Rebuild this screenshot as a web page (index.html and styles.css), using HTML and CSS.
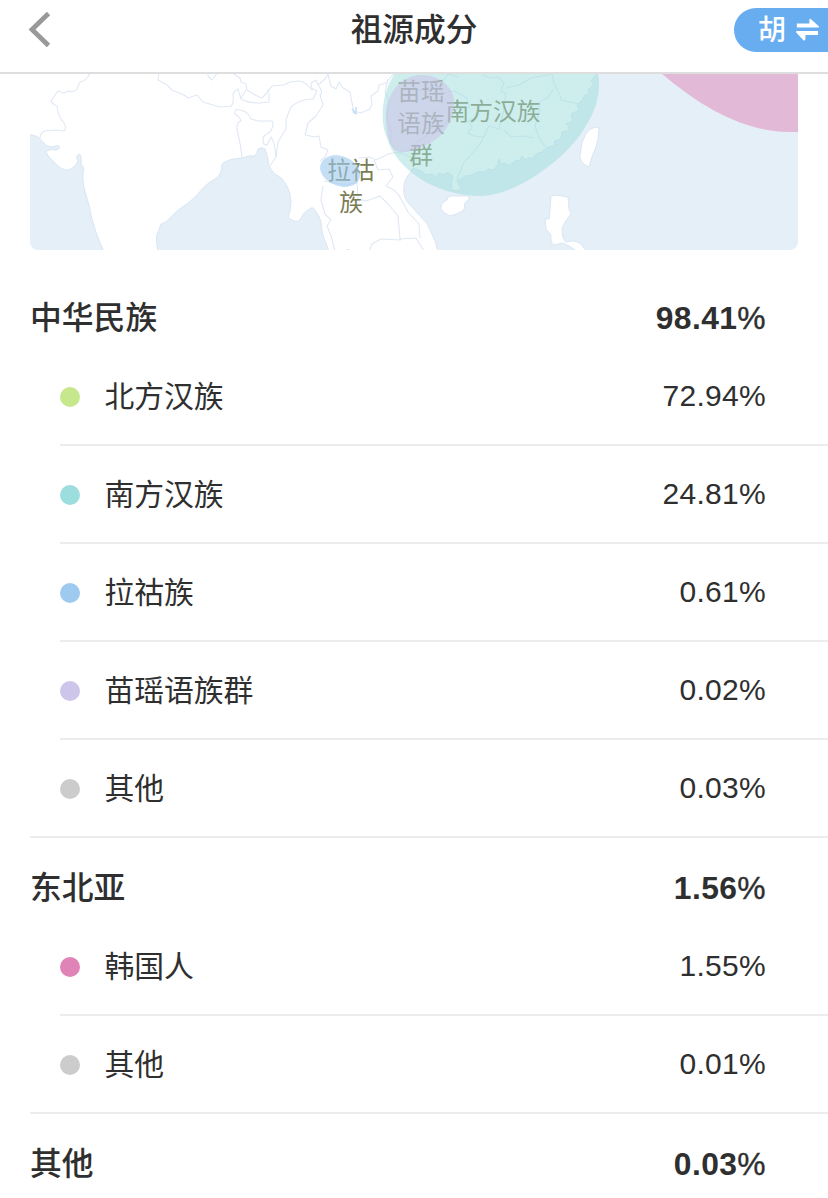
FILE: index.html
```html
<!DOCTYPE html>
<html lang="zh-CN">
<head>
  <meta charset="UTF-8" />
  <meta name="viewport" content="width=device-width, initial-scale=1.0"/>
  <title>祖源成分</title>
  <link rel="stylesheet" href="styles.css">
</head>
<body>

<header class="header">
  <a class="back" href="#" aria-label="返回">
    <svg width="24" height="36" viewBox="0 0 24 36"><path d="M20.5 1.5 L4 17.5 L20.5 33.5" fill="none" stroke="#999" stroke-width="4.8"/></svg>
  </a>
  <h1 class="title">祖源成分</h1>
  <button class="switch">
    <span>胡</span>
    <svg width="24" height="24" viewBox="0 0 24 24" fill="#fff">
      <path d="M0.8 5.4 H13.4 V2 Q13.4 0 15 1.2 L22.8 8.3 V9.6 H0.8 Z"/>
      <path d="M22 17.1 H9.4 V21 Q9 23.4 7.4 22.2 L0.2 14.6 V13 H22 Z"/>
    </svg>
  </button>
</header>

<main>
  <svg class="map" viewBox="30 74 768 176">
    <!-- land -->
    <g class="land">
      <path d="M28 60 V134 L36 136 Q40 138 42 141 Q46 147 52 147 Q57 145 59 146 Q61 149 56 150 Q48 149 46 152 Q48 157 54 162 Q62 171 68 170 Q75 168 78 161 Q75 156 79 154 Q82 155 81 164 Q85 167 83 173 Q82 182 86 195 Q90 207 91 215 Q95 232 104 252 H158 Q155 236 158 232 L161 224 Q166 223 171 217 Q179 208 187 204 Q197 196 204 187 Q209 182 215 179 Q222 175 222 164 Q227 159 242 158 Q249 155 255 156 Q257 153 258 149 Q262 146 265 149 Q268 156 269 166 Q273 174 280 177 Q287 183 290 194 Q292 202 290 211 Q287 218 290 219 Q297 223 300 220 Q304 211 310 209 Q312 206 314 209 Q320 216 321 222 Q322 236 326 243 L329 252 H345 Q348 247 352 252 H438 Q436 241 431 232 Q428 223 421 217 L411 206 Q402 198 404 185 Q405 178 410 173 L413 168 L421 171 L426 175 L432 174 L436 177 L439 173 L444 175 L447 172 L453 176 L451 187 Q452 192 459 190 L461 188 L458 183 L457 180 L461 179 L465 176 L472 175 L478 172 L485 172 L488 169 L493 170 L497 166 L499 159 L501 164 L506 163 L508 166 L515 161 L520 160 L522 156 L526 160 L530 157 L532 159 L536 154 L542 152 L548 147 L554 146 L555 141 L561 139 L562 132 L568 131 L569 127 L566 124 L573 121 L571 114 L579 110 L577 105 L582 100 L585 95 L590 94 L588 90 L594 84 L591 81 L596 75 L597 60 Z"/>
      <path d="M596 127 L599 128 Q599 139 596 147 Q592 155 589 167 L585 165 Q579 160 580 155 L582 143 Q585 133 590 129 Z"/>
      <path d="M448 197 Q452 195 456 196 L469 196 L469 199 L465 203 L464 210 L457 214 L450 216 Q443 213 441 209 Q440 203 447 200 Z"/>
      <path d="M551 196 L555 195 L568 197 L569 209 L571 214 Q565 221 562 228 Q562 239 566 242 Q575 239 581 244 L587 252 H578 L569 246 L563 243 L554 245 Q550 243 551 235 L546 229 L545 219 L549 219 L550 210 Z"/>
    </g>

    <!-- borders -->
    <g class="border">
      <path d="M90 72 Q88 80 80 82 L77 89 Q74 93 68 91 L64 93 L58 91 Q54 96 51 101 Q52 104 57 106 Q58 116 64 123 Q67 129 64 131 L56 130 L44 131 Q40 134 40 138"/>
      <path d="M159 72 L158 80 L167 85 L172 90 L184 95 L188 98 L197 95 L203 102 L213 105 L220 107 L231 106 Q234 104 233 94 Q235 90 238 89 L241 99 Q247 103 260 103 L269 102 L269 93 M267 93 L272 86 L284 85 L290 82 L299 81 Q306 82 312 90 L311 83 L316 80 L318 85 L325 79 L328 74 L331 86 L336 89 L339 82 L343 88 L350 92 L352 103 L354 111 L361 113 L370 109 L372 104 L371 96 L378 91 L379 85 L386 83 L395 72"/>
      <path d="M231 72 L240 78 L241 82 L246 84 L247 90 Q254 95 262 98 Q267 94 269 89 M246 90 L241 98 M208 72 L208 76 L212 80 L218 72"/>
      <path d="M242 158 Q241 146 238 134 Q235 122 241 121 Q240 117 235 114 Q234 108 240 110 Q248 111 251 119 L258 121 L272 121 Q275 124 270 132 L264 136 Q261 145 267 145 L271 137 Q275 143 276 157 L270 166"/>
      <path d="M276 157 L278 142 L286 129 L286 119 L291 107 Q300 99 313 99 L317 91 L311 88 M318 85 Q324 92 320 95 L323 105 L316 116 L308 123 L305 135 L315 137 L319 136 L321 147 L328 150 L325 157 L320 161"/>
      <path d="M359 158 L370 157 L376 160 L388 154 L399 152 L413 158 M374 160 L378 170 L389 169 L393 177 L386 186 Q397 190 401 199 L408 212 L419 224 L420 238 M323 186 L321 200 L325 214 L331 220 L327 226 L331 236 L335 251 M324 181 L347 185 L357 182 L358 199 L366 201 L380 196 L389 205 L398 216 L399 228 L400 239 L416 238 L424 251 M401 240 L381 239 L372 244 L369 252"/>
      <path d="M388 79 L385 92 L389 101 L387 119 L392 133 L390 143 L399 153 L411 150 L418 141 L431 133 L440 131 L448 120 L457 109 L469 107 L467 98 L454 91 L444 93 L434 85 L420 91 L412 86"/>
      <path d="M430 84 L444 80 L448 74 L459 77 M483 75 L490 78 L498 77 L504 83 L501 91 L506 93 L504 104 L503 113 L499 129 L489 126 L484 137 L474 136 L468 133 L472 127 L468 121 L476 118"/>
      <path d="M506 88 L519 85 L531 78 L552 74 L554 84 L560 95 L561 100 L579 104 M554 89 L547 98 L540 102 L539 113 L535 126 L539 138 L547 149 M504 130 L511 137 L524 136 L534 138 M484 137 L480 144 L474 151 L463 164 L457 179"/>
    </g>
    <path class="lake" d="M352 109 L355 113 L356 112 L356 107 M353 112 L357 114"/>

    <!-- labels sit under the colored regions -->
    <g class="map-label">
      <text x="421" y="100">苗瑶</text>
      <text x="421" y="132">语族</text>
      <text x="421" y="164">群</text>
      <text x="493" y="120">南方汉族</text>
      <text x="351" y="179">拉祜</text>
      <text x="351" y="211">族</text>
    </g>

    <!-- regions -->
    <path class="region teal" d="M396 72 C382 90 379 121 387 138 C396 169 435 196 481 196 C519 195 570 155 585 127 C597 109 601 91 598 72 Z"/>
    <path class="region purple" d="M386 117 C386 93 401 75 422 75 C442 75 455 90 454 103 C453 121 446 134 430 143 C420 149 410 152 402 152 C390 151 386 137 386 117 Z"/>
    <path class="region blue" d="M320 168 C320 160 328 155 336 155 C349 156 359 164 360 173 C361 182 354 187 344 187 C333 186 321 179 320 168 Z"/>
    <path class="region pink" d="M660 72 C705 111 748 132 790 132 H800 V72 Z"/>
  </svg>

  <section class="group">
    <div class="group-title"><span>中华民族</span><span class="value">98.41<i>%</i></span></div>
    <ul class="list">
      <li class="item"><span class="dot dot-green"></span><span class="name">北方汉族</span><span class="value">72.94%</span></li>
      <li class="item"><span class="dot dot-teal"></span><span class="name">南方汉族</span><span class="value">24.81%</span></li>
      <li class="item"><span class="dot dot-blue"></span><span class="name">拉祜族</span><span class="value">0.61%</span></li>
      <li class="item"><span class="dot dot-purple"></span><span class="name">苗瑶语族群</span><span class="value">0.02%</span></li>
      <li class="item"><span class="dot"></span><span class="name">其他</span><span class="value">0.03%</span></li>
    </ul>
  </section>

  <section class="group">
    <div class="group-title"><span>东北亚</span><span class="value">1.56<i>%</i></span></div>
    <ul class="list">
      <li class="item"><span class="dot dot-pink"></span><span class="name">韩国人</span><span class="value">1.55%</span></li>
      <li class="item"><span class="dot"></span><span class="name">其他</span><span class="value">0.01%</span></li>
    </ul>
  </section>

  <section class="group">
    <div class="group-title"><span>其他</span><span class="value">0.03<i>%</i></span></div>
  </section>
</main>

</body>
</html>
```

FILE: styles.css
```css
* {
  box-sizing: border-box;
}

body {
  margin: 0;
  height: 1198px;
  overflow: hidden;
  background: #fff;
  color: #2f2f30;
  font-family: "Liberation Sans", "Noto Sans CJK SC", sans-serif;
}

.header {
  display: grid;
  grid-template-columns: 1fr auto 1fr;
  height: 74px;
  padding-bottom: 13px;
  align-items: center;
  border-bottom: 2px solid #dedede;
}

.back {
  display: flex;
  padding-left: 28px;
}

.title {
  margin: 0;
  padding-top: 2px;
  font-size: 31.7px;
  font-weight: 500;
  line-height: 57px;
}

.switch {
  display: flex;
  align-items: center;
  justify-self: end;
  gap: 10px;
  width: 94px;
  height: 44px;
  padding: 1px 0 0 24px;
  border: none;
  border-radius: 22px 0 0 22px;
  background: #68adf0;
  color: #fff;
  font-family: inherit;
  font-size: 28px;
  font-weight: 500;
  line-height: 42px;
}

.switch span {
  padding-top: 1px;
}

.switch svg {
  flex: none;
}

.map {
  display: block;
  width: 768px;
  height: 176px;
  margin: 0 30px 18px;
  border-radius: 0 0 8px 8px;
  background: #e5eff8;
}

.land {
  fill: #fff;
  stroke: #dae5f2;
  stroke-width: 1;
}

.border {
  fill: none;
  stroke: #e0e8f4;
  stroke-width: 1.1;
  stroke-linejoin: round;
}

.lake {
  fill: none;
  stroke: #c5dff3;
  stroke-width: 1.5;
}

.map-label {
  fill: #7a7d53;
  font-size: 23.7px;
  text-anchor: middle;
}

.region {
  opacity: 0.5;
}

.teal {
  fill: #9cdddb;
}

.purple {
  fill: #cbbce8;
}

.blue {
  fill: #9cc9ef;
  opacity: 0.6;
}

.pink {
  fill: #e083b6;
}

.group {
  margin-left: 30px;
  padding-top: 20px;
  border-bottom: 2px solid #ebecee;
}

.group:last-child {
  border-bottom: none;
}

.group-title {
  display: flex;
  justify-content: space-between;
  height: 60px;
  padding-right: 62px;
  font-size: 31.8px;
  font-weight: 500;
  line-height: 60px;
}

.group-title .value {
  font-weight: bold;
  letter-spacing: 0.4px;
}

.group-title i {
  font-style: normal;
  font-weight: normal;
  -webkit-text-stroke: 0.4px #2f2f30;
}

.list {
  margin: 0 0 0 30px;
  padding: 0;
  list-style: none;
}

.item {
  display: flex;
  align-items: center;
  height: 98px;
  padding: 1px 62px 0 0;
  border-bottom: 2px solid #ebecee;
  font-size: 30px;
  line-height: 95px;
}

.item:last-child {
  height: 96px;
  border-bottom: none;
}

.item .name {
  font-size: 29.8px;
}

.item .value {
  margin-left: auto;
  padding-bottom: 2px;
  letter-spacing: 0.3px;
  line-height: 93px;
}

.dot {
  width: 20px;
  height: 20px;
  margin-right: 24.4px;
  border-radius: 50%;
  background: #cccccc;
}

.dot-green {
  background: #c6e78c;
}

.dot-teal {
  background: #9cdddd;
}

.dot-blue {
  background: #9fcaf0;
}

.dot-purple {
  background: #cec5ea;
}

.dot-pink {
  background: #e083b6;
}
```
